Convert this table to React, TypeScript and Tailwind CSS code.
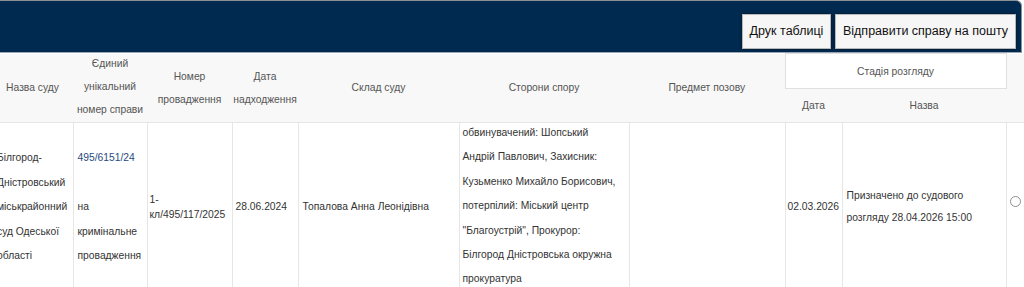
import React from "react";

const F = { fontFamily: '"Liberation Sans", Arial, sans-serif' };

export default function App() {
  return (
    <div className="w-[1024px] h-[287px] overflow-hidden bg-white" style={F}>
      <div className="h-[53px] mr-[2px] bg-[#012a50] border-t border-r border-[#8b8f96] rounded-tr-[6px] border-b border-b-[#9aa6b4] flex items-end justify-end gap-[4px] pr-[5px] pb-[3px]">
        <button className="h-[35px] w-[89px] bg-[#f6f6f6] border border-[#b8b8b8] shadow-[0_0_3px_rgba(0,0,0,0.5)] text-[12.5px] text-[#111]">
          Друк таблиці
        </button>
        <button className="h-[35px] w-[181px] bg-[#f6f6f6] border border-[#b8b8b8] shadow-[0_0_3px_rgba(0,0,0,0.5)] text-[12.5px] text-[#111]">
          Відправити справу на пошту
        </button>
      </div>
      <table className="table-fixed border-collapse -ml-[8px] w-[1044px] text-[10.3px]">
        <colgroup>
          <col className="w-[81px]" />
          <col className="w-[74px]" />
          <col className="w-[85px]" />
          <col className="w-[66px]" />
          <col className="w-[161px]" />
          <col className="w-[170px]" />
          <col className="w-[156px]" />
          <col className="w-[57px]" />
          <col className="w-[164px]" />
          <col className="w-[30px]" />
        </colgroup>
        <thead className="bg-[#f8f8f8] text-[#555] font-normal">
          <tr className="h-[35px]">
            <th rowSpan={2} className="font-normal leading-[23px] p-0 text-center">Назва суду</th>
            <th rowSpan={2} className="font-normal leading-[23px] p-0 text-center">
              <div className="-mt-[2px]">Єдиний<br />унікальний<br />номер справи</div>
            </th>
            <th rowSpan={2} className="font-normal leading-[23px] p-0 text-center">
              Номер<br />провадження
            </th>
            <th rowSpan={2} className="font-normal leading-[23px] p-0 text-center">
              Дата<br />надходження
            </th>
            <th rowSpan={2} className="font-normal leading-[23px] p-0 text-center">Склад суду</th>
            <th rowSpan={2} className="font-normal leading-[23px] p-0 text-center">Сторони спору</th>
            <th rowSpan={2} className="font-normal leading-[23px] p-0 text-center">Предмет позову</th>
            <th colSpan={2} className="font-normal leading-[23px] p-0 text-center bg-white border border-[#e0e0e0]">
              Стадія розгляду
            </th>
            <th rowSpan={2} className="p-0"></th>
          </tr>
          <tr className="h-[34px]">
            <th className="font-normal leading-[23px] p-0 text-center">Дата</th>
            <th className="font-normal leading-[23px] p-0 text-center">Назва</th>
          </tr>
        </thead>
        <tbody className="text-[#333]">
          <tr className="border-t border-[#e6e6e6] align-middle">
            <td className="border-r border-[#e6e6e6] pl-[5px] pr-[2px] pt-0 pb-[3px] leading-[24.5px] whitespace-nowrap">
              Білгород-<br />Дністровський<br />міськрайонний<br />суд Одеської<br />області
            </td>
            <td className="border-r border-[#e6e6e6] px-[4px] pt-0 pb-[3px] leading-[24.5px] whitespace-nowrap">
              <span className="text-[#1f4a7e]">495/6151/24</span>
              <br />
              <br />
              на<br />кримінальне<br />провадження
            </td>
            <td className="border-r border-[#e6e6e6] px-[2px] pt-0 pb-[3px] leading-[15px] whitespace-nowrap">
              1-<br />кл/495/117/2025
            </td>
            <td className="border-r border-[#e6e6e6] px-[3px] pt-0 pb-[3px] leading-[24.5px] whitespace-nowrap">
              28.06.2024
            </td>
            <td className="border-r border-[#e6e6e6] px-[4px] pt-0 pb-[3px] leading-[24.5px] whitespace-nowrap">
              Топалова Анна Леонідівна
            </td>
            <td className="border-r border-[#e6e6e6] px-[3px] pt-0 pb-[3px] leading-[24.4px] whitespace-nowrap">
              <div className="-mt-[2px]">
                обвинувачений: Шопський<br />
                Андрій Павлович, Захисник:<br />
                Кузьменко Михайло Борисович,<br />
                потерпілий: Міський центр<br />
                "Благоустрій", Прокурор:<br />
                Білгород Дністровська окружна<br />
                прокуратура
              </div>
            </td>
            <td className="border-r border-[#e6e6e6] px-[4px] py-0"></td>
            <td className="border-r border-[#e6e6e6] px-[2px] pt-0 pb-[3px] leading-[24.5px] whitespace-nowrap">
              02.03.2026
            </td>
            <td className="border-r border-[#e6e6e6] px-[4px] pt-0 pb-[3px] leading-[22px] whitespace-nowrap">
              Призначено до судового<br />розгляду 28.04.2026 15:00
            </td>
            <td className="px-[3px] py-0">
              <div className="w-[11px] h-[11px] rounded-full border border-[#8f8f8f] bg-white -mt-[13px]"></div>
            </td>
          </tr>
        </tbody>
      </table>
    </div>
  );
}
